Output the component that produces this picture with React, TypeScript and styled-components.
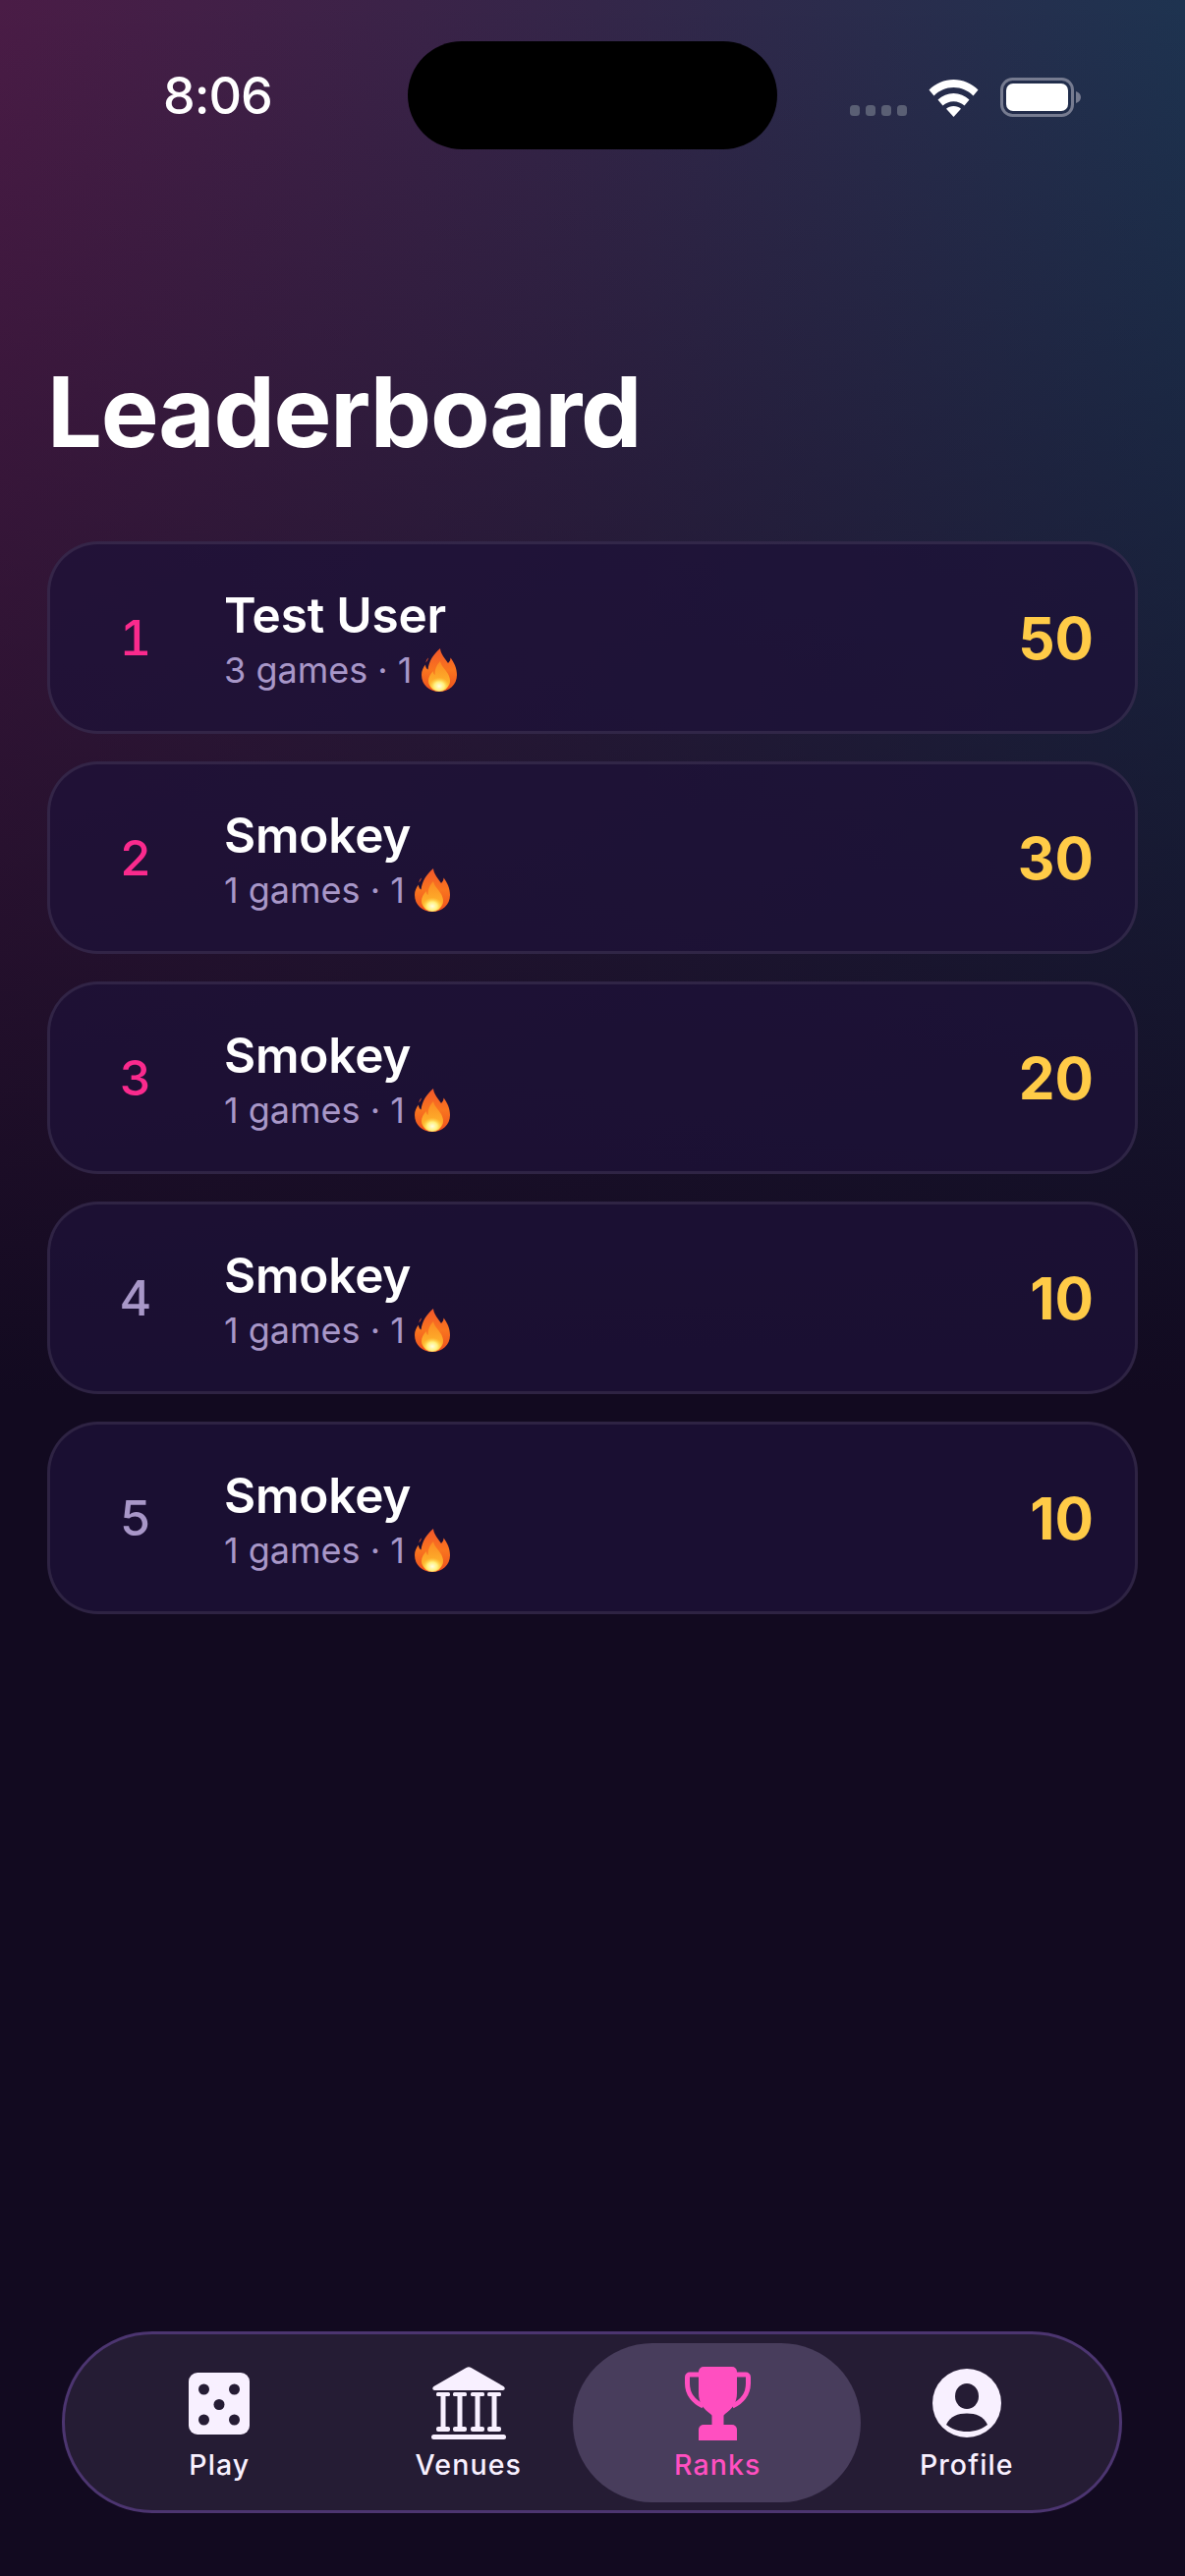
import React from "react";
import styled, { createGlobalStyle } from "styled-components";

const Global = createGlobalStyle`
  html, body { margin: 0; padding: 0; background: #120a20; }
  body { font-family: "Inter", "Liberation Sans", sans-serif; -webkit-font-smoothing: antialiased; }
`;

const Screen = styled.div`
  width: 1206px;
  height: 2622px;
  display: flex;
  flex-direction: column;
  overflow: hidden;
  background:
    linear-gradient(180deg, rgba(18, 10, 32, 0) 0px, #120a20 1420px),
    linear-gradient(90deg, #4a1c46 0%, #342649 50%, #1e3350 100%);
`;

const StatusBar = styled.div`
  height: 152px;
  padding-top: 42px;
  box-sizing: border-box;
  display: flex;
  align-items: flex-start;
  flex-shrink: 0;
`;

const Time = styled.div`
  width: 415px;
  padding: 35px 0 0 166px;
  box-sizing: border-box;
  color: #fff;
  font-size: 52px;
  line-height: 42px;
  letter-spacing: -1px;
  font-weight: 500;
`;

const Island = styled.div`
  width: 376px;
  height: 110px;
  border-radius: 55px;
  background: #000;
`;

const StatusIcons = styled.div`
  display: flex;
  align-items: flex-end;
  gap: 22px;
  margin: 37px 0 0 74px;
`;

const Title = styled.h1`
  margin: 209px 0 0 48px;
  color: #fff;
  font-size: 99px;
  line-height: 116px;
  letter-spacing: -1.3px;
  font-weight: 700;
`;

const List = styled.div`
  margin: 74px 48px 0;
  display: flex;
  flex-direction: column;
  gap: 28px;
`;

const Card = styled.div`
  height: 196px;
  box-sizing: border-box;
  display: flex;
  align-items: center;
  padding: 0 42px 0 0;
  border: 3px solid rgba(255, 255, 255, 0.085);
  border-radius: 52px;
  background: rgba(29, 17, 56, 0.75);
`;

const Rank = styled.div<{ $top: boolean }>`
  width: 180px;
  flex-shrink: 0;
  text-align: center;
  margin-left: -3px;
  font-size: 50px;
  font-weight: 500;
  font-feature-settings: "tnum";
  color: ${(p) => (p.$top ? "#fa2a8d" : "#a897c8")};
`;

const Info = styled.div`
  flex: 1;
  display: flex;
  flex-direction: column;
  padding-top: 4px;
`;

const Name = styled.div`
  color: #fff;
  font-size: 49.5px;
  line-height: 60px;
  letter-spacing: -0.2px;
  font-weight: 600;
`;

const Meta = styled.div`
  display: flex;
  align-items: center;
  color: #a897c8;
  font-size: 36px;
  line-height: 50px;
  font-weight: 400;
  margin-top: 1px;
`;

const Score = styled.div`
  color: #ffcb47;
  font-size: 58.5px;
  font-weight: 700;
`;

const Spacer = styled.div`
  flex: 1;
`;

const Nav = styled.nav`
  margin: 0 64px 64px 63px;
  padding-left: 2px;
  height: 185px;
  box-sizing: border-box;
  display: flex;
  justify-content: center;
  border: 3px solid #4c3570;
  border-radius: 92px;
  background: #251c34;
`;

const Tab = styled.div<{ $active?: boolean }>`
  position: relative;
  width: 253.5px;
  display: flex;
  flex-direction: column;
  align-items: center;
  color: ${(p) => (p.$active ? "#ff4fc0" : "#f8f0ff")};
  font-size: 28.5px;
  letter-spacing: 1.1px;
  font-weight: 500;
  line-height: 34px;
`;

const TabPill = styled.div`
  position: absolute;
  left: -21px;
  right: -19px;
  top: 9px;
  height: 162px;
  border-radius: 81px;
  background: #483d5c;
`;

const TabIcon = styled.div`
  position: relative;
  height: 78px;
  margin-top: 31px;
  display: flex;
  align-items: center;
  justify-content: center;
`;

const TabLabel = styled.span`
  position: relative;
  margin-top: 7px;
`;

const FlameIcon = styled.svg`
  margin-left: 10px;
  flex-shrink: 0;
`;

const Flame = () => (
  <FlameIcon width="36" height="44" viewBox="0 0 36 44">
    <defs>
      <linearGradient id="flameOuter" x1="0" y1="0" x2="0" y2="1">
        <stop offset="0" stopColor="#f2562a" />
        <stop offset="0.5" stopColor="#f9751f" />
        <stop offset="1" stopColor="#ee4f1e" />
      </linearGradient>
      <linearGradient id="flameMid" x1="0" y1="0" x2="0" y2="1">
        <stop offset="0" stopColor="#fb8a22" />
        <stop offset="1" stopColor="#ffc02f" />
      </linearGradient>
      <radialGradient id="flameCore" cx="50%" cy="65%" r="55%">
        <stop offset="0" stopColor="#fffde0" />
        <stop offset="0.5" stopColor="#fff07a" />
        <stop offset="1" stopColor="#ffd23f" stopOpacity="0" />
      </radialGradient>
    </defs>
    <path
      d="M19 0c.5 6 5 10 8 15 1.500-1.500 2.500-3 2.500-5.500C33 14 36 20 36 27c0 10-8 17-18 17S0 37 0 27c0-4 1.500-7.500 4-10.500C4 19 5 20.500 6.500 21.500 7.500 13 12 6 19 0z"
      fill="url(#flameOuter)"
    />
    <path d="M7 9.500c-.5 2-1.500 3.500-2.500 5 0-2 1-4 2.500-5z" fill="#f2562a" />
    <path
      d="M19 13c1 5 5 8 8 13 1.500 3 2 5 2 7 0 6-5 10-11 10S7 39 7 33c0-4 2-7 5-10 0 2 .5 3 1.500 4 0-6 2-10 5.500-14z"
      fill="url(#flameMid)"
    />
    <ellipse cx="18" cy="36" rx="9.500" ry="8" fill="url(#flameCore)" />
  </FlameIcon>
);

const Wifi = () => (
  <svg width="51" height="38" viewBox="0 0 50 38" fill="#fff">
    <path d="M25 0c9.500 0 18 3.700 25 10.500l-5 6C39.500 11 32.700 8 25 8S10.500 11 5 16.500l-5-6C7 3.700 15.500 0 25 0z" />
    <path d="M25 14c6 0 11.500 2.300 16 6.500l-5 6c-3-2.700-6.800-4.300-11-4.300s-8 1.600-11 4.300l-5-6C13.500 16.300 19 14 25 14z" />
    <path d="M25 27c3 0 5.500 1 7.500 2.800L25 38l-7.500-8.200C19.500 28 22 27 25 27z" />
  </svg>
);

const Battery = () => (
  <svg width="83" height="40" viewBox="0 0 83 40">
    <rect x="1.500" y="1.500" width="72" height="37" rx="11" fill="none" stroke="#767b90" strokeWidth="3" />
    <rect x="6" y="6" width="63" height="28" rx="7" fill="#fff" />
    <path d="M77 14c3 1 5 3 5 6s-2 5-5 6z" fill="#767b90" />
  </svg>
);

const SignalIcon = styled.svg`
  margin-bottom: 1px;
`;

const Signal = () => (
  <SignalIcon width="58" height="11" viewBox="0 0 58 11" fill="#5a5f74">
    <rect x="0" y="0" width="10" height="11" rx="3.500" />
    <rect x="16" y="0" width="10" height="11" rx="3.500" />
    <rect x="32" y="0" width="10" height="11" rx="3.500" />
    <rect x="48" y="0" width="10" height="11" rx="3.500" />
  </SignalIcon>
);

const Dice = () => (
  <svg width="62" height="63" viewBox="0 0 62 63">
    <rect width="62" height="63" rx="9" fill="#f8f0ff" />
    <g fill="#251c34">
      <circle cx="15.500" cy="17" r="5.500" />
      <circle cx="46.500" cy="17" r="5.500" />
      <circle cx="31" cy="32.500" r="5.500" />
      <circle cx="15.500" cy="48" r="5.500" />
      <circle cx="46.500" cy="48" r="5.500" />
    </g>
  </svg>
);

const Bank = () => (
  <svg width="76" height="74" viewBox="0 0 76 74" fill="#f8f0ff">
    <path d="M35.500 1a5 5 0 0 1 5 0l33 19c2 1.200 1.500 4-1 4H3.500c-2.500 0-3-2.800-1-4z" />
    <rect x="5" y="26" width="14" height="4" rx="1.500" />
    <rect x="22" y="26" width="14" height="4" rx="1.500" />
    <rect x="40" y="26" width="14" height="4" rx="1.500" />
    <rect x="57" y="26" width="14" height="4" rx="1.500" />
    <rect x="9.500" y="29" width="5" height="34" />
    <rect x="26.500" y="29" width="5" height="34" />
    <rect x="44.500" y="29" width="5" height="34" />
    <rect x="61.500" y="29" width="5" height="34" />
    <rect x="5" y="61" width="14" height="5" rx="2" />
    <rect x="22" y="61" width="14" height="5" rx="2" />
    <rect x="40" y="61" width="14" height="5" rx="2" />
    <rect x="57" y="61" width="14" height="5" rx="2" />
    <rect x="0" y="69" width="76" height="5" rx="2.500" />
  </svg>
);

const Trophy = () => (
  <svg width="67" height="75" viewBox="0 0 67 75" fill="#ff4fc0">
    <path d="M14 8H5a2.500 2.500 0 0 0-2.500 2.500V17c0 11 7 19 16 23" fill="none" stroke="#ff4fc0" strokeWidth="5" />
    <path d="M53 8h9a2.500 2.500 0 0 1 2.500 2.500V17c0 11-7 19-16 23" fill="none" stroke="#ff4fc0" strokeWidth="5" />
    <path d="M19 0h29a5 5 0 0 1 5 5v22c0 10-5 16-12 21l-1.500 1.500V60h-12V49.500L26 48C19 43 14 37 14 27V5a5 5 0 0 1 5-5z" />
    <path d="M19 59h29a5 5 0 0 1 5 5v11H14V64a5 5 0 0 1 5-5z" />
  </svg>
);

const Profile = () => (
  <svg width="70" height="70" viewBox="0 0 70 70">
    <circle cx="35" cy="35" r="35" fill="#f8f0ff" />
    <ellipse cx="35" cy="28" rx="12" ry="13" fill="#251c34" />
    <path d="M14 57c4-9 12-11.500 21-11.500S52 48 56 57c-5.500 4.500-13 7-21 7s-15.500-2.500-21-7z" fill="#251c34" />
  </svg>
);

const rows = [
  { rank: 1, name: "Test User", games: 3, score: 50 },
  { rank: 2, name: "Smokey", games: 1, score: 30 },
  { rank: 3, name: "Smokey", games: 1, score: 20 },
  { rank: 4, name: "Smokey", games: 1, score: 10 },
  { rank: 5, name: "Smokey", games: 1, score: 10 },
];

export default function App() {
  return (
    <Screen>
      <Global />
      <StatusBar>
        <Time>8:06</Time>
        <Island />
        <StatusIcons>
          <Signal />
          <Wifi />
          <Battery />
        </StatusIcons>
      </StatusBar>
      <Title>Leaderboard</Title>
      <List>
        {rows.map((r) => (
          <Card key={r.rank}>
            <Rank $top={r.rank <= 3}>{r.rank}</Rank>
            <Info>
              <Name>{r.name}</Name>
              <Meta>
                {r.games} games · 1
                <Flame />
              </Meta>
            </Info>
            <Score>{r.score}</Score>
          </Card>
        ))}
      </List>
      <Spacer />
      <Nav>
        <Tab>
          <TabIcon><Dice /></TabIcon>
          <TabLabel>Play</TabLabel>
        </Tab>
        <Tab>
          <TabIcon><Bank /></TabIcon>
          <TabLabel>Venues</TabLabel>
        </Tab>
        <Tab $active>
          <TabPill />
          <TabIcon><Trophy /></TabIcon>
          <TabLabel>Ranks</TabLabel>
        </Tab>
        <Tab>
          <TabIcon><Profile /></TabIcon>
          <TabLabel>Profile</TabLabel>
        </Tab>
      </Nav>
    </Screen>
  );
}
